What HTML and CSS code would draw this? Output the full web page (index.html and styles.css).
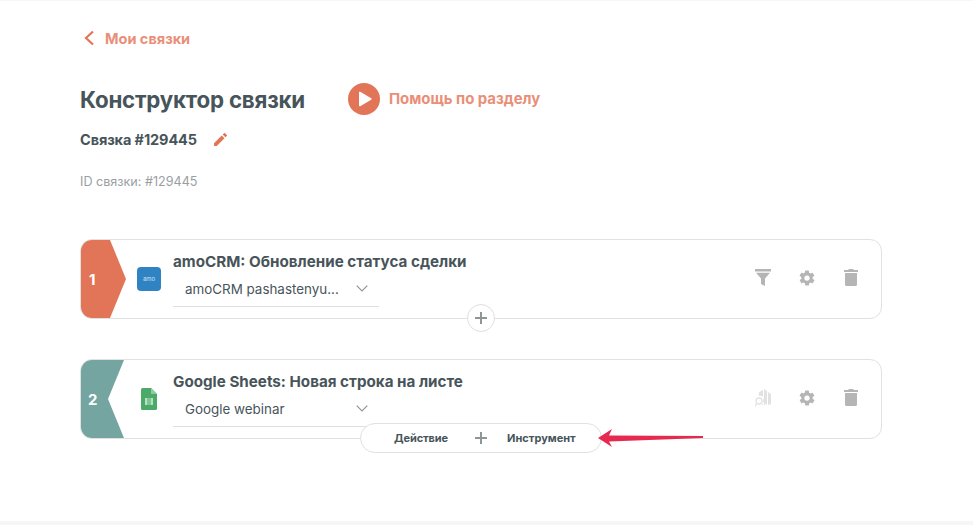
FILE: index.html
```html
<!DOCTYPE html>
<html lang="en">

<head>
    <meta charset="UTF-8">
    <title>Конструктор связки</title>
    <link rel="stylesheet" href="styles.css">
</head>

<body>
    <div id="app">
        <a class="back" href="#">
            <svg width="12" height="16" viewBox="0 0 12 16"><path d="M10 1.5 3 8l7 6.5" fill="none" stroke="#e27558" stroke-width="2.2"/></svg>
            <span>Мои связки</span>
        </a>

        <header class="head">
            <h1>Конструктор связки</h1>
            <a class="help" href="#">
                <span class="play"><svg width="14" height="16" viewBox="0 0 14 16"><path d="M1 1.5v13a.8.8 0 0 0 1.2.7l11-6.5a.8.8 0 0 0 0-1.4L2.200.8A.8.8 0 0 0 1 1.500z" fill="#fff"/></svg></span>
                <span>Помощь по разделу</span>
            </a>
        </header>

        <div class="name">
            <h2>Связка #129445</h2>
            <svg width="13" height="13" viewBox="0 0 14 14"><path d="M0 11v3h3l8.300-8.300-3-3zM13.800 3.200a.8.8 0 0 0 0-1.100L11.900.2a.8.8 0 0 0-1.100 0L9.300 1.700l3 3z" fill="#e27558"/></svg>
        </div>

        <p class="id">ID связки: #129445</p>

        <!-- step 1 -->
        <div class="step">
            <div class="num num-first">1</div>
            <div class="logo">
                <span class="amo">amo</span>
            </div>
            <div class="info">
                <h3>amoCRM: Обновление статуса сделки</h3>
                <div class="select">
                    <span>amoCRM pashastenyu...</span>
                    <svg width="12" height="7" viewBox="0 0 12 7"><path d="M.7.7 6 6l5.300-5.300" fill="none" stroke="#8f9698" stroke-width="1.200"/></svg>
                </div>
            </div>
            <div class="tools">
                <svg width="16" height="17" viewBox="0 0 16 17"><path d="M0 0h16v2.500H0zM1 3.800h14L10 9.500V17l-4-2V9.500z" fill="#b5b5b5"/></svg>
                <svg class="gear" width="18" height="18" viewBox="0 0 24 24"><path d="M19.400 13c.1-.3.100-.7.100-1s0-.7-.1-1l2.100-1.600c.2-.2.200-.4.100-.6l-2-3.500c-.1-.2-.4-.3-.6-.2l-2.500 1c-.5-.4-1.100-.7-1.700-1l-.4-2.700c0-.2-.2-.4-.5-.4h-4c-.2 0-.4.200-.5.400l-.4 2.700c-.6.200-1.200.6-1.700 1l-2.500-1c-.2-.1-.5 0-.6.200l-2 3.500c-.1.200-.1.500.1.600L4.600 11c0 .3-.1.700-.1 1s0 .7.100 1l-2.100 1.600c-.2.200-.2.400-.1.600l2 3.500c.1.200.4.300.6.200l2.500-1c.5.400 1.100.7 1.700 1l.4 2.700c0 .2.200.4.500.4h4c.2 0 .5-.2.500-.4l.4-2.700c.6-.2 1.200-.6 1.700-1l2.500 1c.2.100.5 0 .6-.2l2-3.500c.1-.2.100-.5-.1-.6zM12 15.500a3.500 3.500 0 1 1 0-7 3.500 3.500 0 0 1 0 7z" fill="#b5b5b5"/></svg>
                <svg width="14" height="17" viewBox="0 0 14 17"><path d="M5 0h4l1 1h4v2H0V1h4zM1 4h12v11.500a1.500 1.500 0 0 1-1.500 1.500h-9A1.500 1.500 0 0 1 1 15.500z" fill="#b5b5b5"/></svg>
            </div>
            <button class="add">
                <svg width="12" height="12" viewBox="0 0 12 12"><path d="M6 0v12M0 6h12" stroke="#8f9698" stroke-width="2"/></svg>
            </button>
        </div>

        <!-- step 2 -->
        <div class="step">
            <div class="num num-second">2</div>
            <div class="logo">
                <svg width="16" height="22" viewBox="0 0 16 22"><path d="M1.500 0H10l6 6v14.500a1.500 1.500 0 0 1-1.500 1.500h-13A1.500 1.500 0 0 1 0 20.500v-19A1.500 1.500 0 0 1 1.500 0z" fill="#4caa68"/><path d="M10 0l6 6h-6z" fill="#8ccba3"/><path d="M4 10h8v7H4z" fill="#b7e0c4"/><path d="M7 10v7M9 10v7" stroke="#4caa68"/></svg>
            </div>
            <div class="info">
                <h3>Google Sheets: Новая строка на листе</h3>
                <div class="select">
                    <span>Google webinar</span>
                    <svg width="12" height="7" viewBox="0 0 12 7"><path d="M.7.7 6 6l5.300-5.300" fill="none" stroke="#8f9698" stroke-width="1.200"/></svg>
                </div>
            </div>
            <div class="tools">
                <svg width="16" height="18" viewBox="0 0 16 18"><path d="M9 0l3 2v13l-3 1zM13 3l3 2v10l-3 1zM4 3l4-2v6.500A5 5 0 0 0 4 7zM8 9v7H6.500A5 5 0 0 0 8 9z" fill="#e2e2e2"/><circle cx="4" cy="12" r="3" fill="none" stroke="#e2e2e2" stroke-width="1.300"/><path d="M2 14.500 0 17" stroke="#e2e2e2" stroke-width="1.300"/></svg>
                <svg class="gear" width="18" height="18" viewBox="0 0 24 24"><path d="M19.400 13c.1-.3.100-.7.100-1s0-.7-.1-1l2.100-1.600c.2-.2.200-.4.100-.6l-2-3.500c-.1-.2-.4-.3-.6-.2l-2.500 1c-.5-.4-1.100-.7-1.700-1l-.4-2.700c0-.2-.2-.4-.5-.4h-4c-.2 0-.4.200-.5.400l-.4 2.700c-.6.200-1.200.6-1.700 1l-2.500-1c-.2-.1-.5 0-.6.200l-2 3.500c-.1.200-.1.500.1.600L4.600 11c0 .3-.1.700-.1 1s0 .7.100 1l-2.100 1.600c-.2.200-.2.400-.1.600l2 3.500c.1.200.4.300.6.200l2.500-1c.5.400 1.100.7 1.700 1l.4 2.700c0 .2.200.4.500.4h4c.2 0 .5-.2.500-.4l.4-2.700c.6-.2 1.200-.6 1.700-1l2.500 1c.2.100.5 0 .6-.2l2-3.500c.1-.2.100-.5-.1-.6zM12 15.500a3.500 3.500 0 1 1 0-7 3.500 3.500 0 0 1 0 7z" fill="#b5b5b5"/></svg>
                <svg width="14" height="17" viewBox="0 0 14 17"><path d="M5 0h4l1 1h4v2H0V1h4zM1 4h12v11.500a1.500 1.500 0 0 1-1.500 1.500h-9A1.500 1.500 0 0 1 1 15.500z" fill="#b5b5b5"/></svg>
            </div>
            <div class="pick">
                <span class="pick-a">Действие</span>
                <svg width="12" height="12" viewBox="0 0 12 12"><path d="M6 0v12M0 6h12" stroke="#8f9698" stroke-width="2"/></svg>
                <span class="pick-b">Инструмент</span>
            </div>
            <!-- red arrow drawn over the screenshot -->
            <svg class="arrow" width="106" height="20" viewBox="0 0 106 20"><path d="M0 10 14 1l-3 6.500 94 .5v2l-94 3.500 3 5.500z" fill="#e5294f"/></svg>
        </div>
    </div>
</body>

</html>
```

FILE: styles.css
```css
* {
    margin: 0;
    padding: 0;
    box-sizing: border-box;
    font-family: "Inter", "Noto Sans", sans-serif;
}

html,
body {
    height: 100%;
    background-color: white;
    overflow: hidden;
}

#app {
    height: 525px;
    padding: 27px 91px 0 80px;
    border-top: 1px solid #f7f7f7;
    border-bottom: 4px solid #f6f6f6;
    color: #47555a;
}

a {
    text-decoration: none;
}

.back {
    display: flex;
    align-items: center;
    gap: 10px;
    height: 20px;
    padding-left: 3px;
    font-size: 14.500px;
    font-weight: 700;
    color: #e98f79;
}

.head {
    display: flex;
    align-items: center;
    margin-top: 35px;
    height: 32px;
}

h1 {
    width: 268px;
    font-size: 22.300px;
    font-weight: 700;
    letter-spacing: -0.2px;
}

.help {
    display: flex;
    align-items: center;
    gap: 9px;
    font-size: 14.900px;
    font-weight: 700;
    color: #e98f79;
}

.play {
    display: flex;
    align-items: center;
    justify-content: center;
    width: 32px;
    height: 32px;
    padding-left: 2px;
    border-radius: 50%;
    background-color: #e27558;
}

.name {
    display: flex;
    align-items: center;
    gap: 17px;
    margin-top: 16px;
    height: 16px;
}

h2 {
    font-size: 14.500px;
    font-weight: 700;
    letter-spacing: -0.1px;
}

.id {
    margin-top: 27px;
    height: 16px;
    font-size: 12.600px;
    line-height: 16px;
    color: #9aa0a2;
}

.step {
    position: relative;
    display: flex;
    height: 80px;
    border: 1px solid #e1e1e1;
    border-radius: 12px;
}

.id + .step {
    margin-top: 49px;
}

.step + .step {
    margin-top: 40px;
}

.num {
    display: flex;
    align-items: center;
    height: 78px;
    width: 45px;
    padding-left: 8px;
    font-size: 15px;
    font-weight: 700;
    color: white;
    border-radius: 11px 0 0 11px;
}

.num-first {
    background-color: #e27558;
    clip-path: polygon(0 0, 29px 0, 45px 50%, 29px 100%, 0 100%);
}

.num-second {
    padding-left: 7px;
    background-color: #74a5a0;
    clip-path: polygon(0 0, 43px 0, 27px 50%, 43px 100%, 0 100%);
}

.logo {
    display: flex;
    align-items: center;
    justify-content: center;
    width: 47px;
    padding-right: 1px;
}

.amo {
    display: block;
    width: 24px;
    height: 24px;
    border-radius: 4px;
    background-color: #2f83c3;
    font-size: 6px;
    line-height: 24px;
    text-align: center;
    color: #cfe3f2;
}

.info {
    flex: 1;
}

h3 {
    margin-top: 13px;
    height: 18px;
    font-size: 15.200px;
    line-height: 18px;
    font-weight: 700;
}

.select {
    display: flex;
    align-items: center;
    justify-content: space-between;
    width: 206px;
    height: 36px;
    padding: 0 11px 0 12px;
    border-bottom: 1px solid #dfdfdf;
    font-size: 13.400px;
    color: #47555a;
}

.tools {
    display: flex;
    align-items: center;
    gap: 27px;
    margin-right: 23px;
    padding-bottom: 3px;
}

.gear {
    margin-right: 1px;
}

.add {
    position: absolute;
    left: 386px;
    top: 64px;
    display: flex;
    align-items: center;
    justify-content: center;
    width: 28px;
    height: 28px;
    border: 1px solid #dfdfdf;
    border-radius: 50%;
    background-color: white;
}

.pick {
    position: absolute;
    left: 279px;
    top: 63px;
    display: flex;
    align-items: center;
    width: 242px;
    height: 30px;
    padding-left: 33px;
    border: 1px solid #e1e1e1;
    border-radius: 15px;
    background-color: white;
    font-size: 11px;
    font-weight: 700;
}

.pick-a {
    width: 81px;
    letter-spacing: -0.1px;
}

.pick-b {
    margin-left: 20px;
}

.arrow {
    position: absolute;
    left: 517px;
    top: 68px;
}
```
